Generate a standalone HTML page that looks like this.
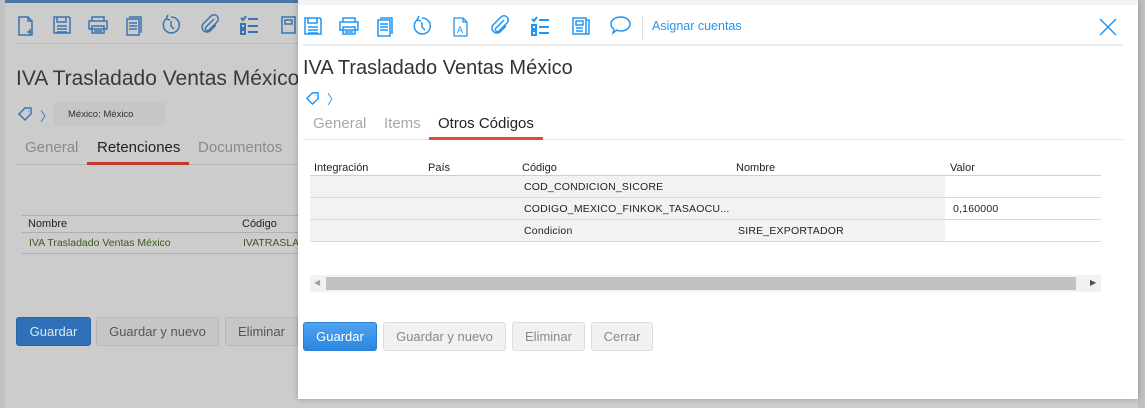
<!DOCTYPE html>
<html><head><meta charset="utf-8"><style>
*{margin:0;padding:0;box-sizing:border-box}
body{width:1145px;height:408px;overflow:hidden;background:#cccccc;font-family:"Liberation Sans",Arial,sans-serif;position:relative}
.a{position:absolute;white-space:nowrap}
svg.i{position:absolute;fill:none;stroke-width:1.5}
.bg svg.i{stroke:#3a74b0}
.md svg.i{stroke:#2196f3}
.btn{position:absolute;border-radius:3px;font-size:13px;text-align:center}
</style></head><body>
<div class="a" style="left:0;top:0;width:5px;height:408px;background:#c2c2c2"></div>
<div class="a" style="left:5px;top:0;width:293px;height:3px;background:#4a78a8"></div>
<div class="a" style="left:1138px;top:0;width:7px;height:3px;background:#4a78a8"></div>
<div class="a" style="left:1138px;top:0;width:7px;height:408px;background:#c0c0c0"></div>
<div class="bg">
<svg class="i" style="left:16px;top:15px" width="22" height="22" viewBox="0 0 22 22"><path d="M3 2h9l4 4v14H3z M12 2v4h4 M14 14v6 M11 17h6"/></svg>
<svg class="i" style="left:52px;top:15px" width="20" height="20" viewBox="0 0 20 20"><path d="M2 2h15l1 1v15H2z M5 2v5h9V2 M5 11h10 M5 14h10 M5 17h10"/></svg>
<svg class="i" style="left:87px;top:15px" width="22" height="20" viewBox="0 0 22 20"><path d="M5 6V2h12v4 M2 6h18v8H2z M5 11h12v7H5z M7 14h8 M7 16h8"/></svg>
<svg class="i" style="left:124px;top:15px" width="20" height="22" viewBox="0 0 20 22"><path d="M5 2h12v16 M3 4h12v16H3z M5 8h8 M5 11h8 M5 14h8"/></svg>
<svg class="i" style="left:160px;top:14px" width="22" height="22" viewBox="0 0 22 22"><path d="M6 5a8 8 0 1 0 5-2 M8 1l-2 4 4 1 M11 7v5l3 3"/></svg>
<svg class="i" style="left:199px;top:14px" width="22" height="22" viewBox="0 0 22 22"><path d="M15 5L7 13a2 2 0 0 0 3 3l8-8a4 4 0 0 0-6-6L4 10a5 5 0 0 0 7 7l6-6"/></svg>
<svg class="i" style="left:239px;top:15px" width="22" height="20" viewBox="0 0 22 20"><path d="M2 3l2 2 3-4 M2 9h4v4H2z M2 15h4v4H2z M9 4h10 M9 11h10 M9 17h10" stroke-width="2"/></svg>
<svg class="i" style="left:280px;top:15px" width="18" height="20" viewBox="0 0 18 20"><path d="M2 2h13v16H2z M5 5h7v4H5z"/></svg>
<div class="a" style="left:16px;top:43px;width:282px;height:1px;background:#bdbdbd"></div>
<div class="a" style="left:16px;top:67px;font-size:21px;color:#3a3a3a">IVA Trasladado Ventas México</div>
<svg class="i" style="left:17px;top:106px" width="16" height="16" viewBox="0 0 16 16"><path d="M2 8l6-6h6v6l-6 6z M11 5h.5"/></svg>
<div class="a" style="left:40px;top:106px;font-size:13px;color:#3a74b0">〉</div>
<div class="a" style="left:53px;top:102px;width:112px;height:24px;background:#c6c6c6;border-radius:3px;font-size:9.5px;color:#333;padding:7px 0 0 15px">México: México</div>
<div class="a" style="left:25px;top:139px;font-size:15px;color:#8a8a8a">General</div>
<div class="a" style="left:97px;top:139px;font-size:15px;color:#222">Retenciones</div>
<div class="a" style="left:198px;top:139px;font-size:15px;color:#8a8a8a">Documentos</div>
<div class="a" style="left:16px;top:164px;width:282px;height:1px;background:#b8b8b8"></div>
<div class="a" style="left:87px;top:162px;width:102px;height:3px;background:#c0392b"></div>
<div class="a" style="left:22px;top:215px;width:276px;height:1px;background:#b0b0b0"></div>
<div class="a" style="left:28px;top:218px;font-size:11px;color:#222">Nombre</div>
<div class="a" style="left:242px;top:218px;font-size:11px;color:#222">Código</div>
<div class="a" style="left:22px;top:232px;width:276px;height:1px;background:#b0b0b0"></div>
<div class="a" style="left:29px;top:237px;font-size:10.5px;color:#3d5a1a">IVA Trasladado Ventas México</div>
<div class="a" style="left:243px;top:237px;font-size:10.5px;color:#3d5a1a">IVATRASLA</div>
<div class="a" style="left:22px;top:253px;width:276px;height:1px;background:#b0b0b0"></div>
<div class="btn" style="left:16px;top:317px;width:75px;height:29px;background:#2f70b8;border:1px solid #2a64a5;color:#dde6f0;line-height:27px">Guardar</div>
<div class="btn" style="left:96px;top:317px;width:123px;height:29px;background:#c6c6c6;border:1px solid #b8b8b8;color:#555;line-height:27px">Guardar y nuevo</div>
<div class="btn" style="left:225px;top:317px;width:73px;height:29px;background:#c6c6c6;border:1px solid #b8b8b8;color:#555;line-height:27px">Eliminar</div>
</div>
<div class="md a" style="left:298px;top:0;width:840px;height:399px;background:#fff;box-shadow:0 0 6px rgba(0,0,0,.25)">
<div class="a" style="left:0;top:0;width:840px;height:5px;background:#f4f4f4"></div>
</div>
<div class="md">
<svg class="i" style="left:303px;top:16px" width="20" height="20" viewBox="0 0 20 20"><path d="M2 2h15l1 1v15H2z M5 2v5h9V2 M5 11h10 M5 14h10 M5 17h10"/></svg>
<svg class="i" style="left:338px;top:16px" width="22" height="20" viewBox="0 0 22 20"><path d="M5 6V2h12v4 M2 6h18v8H2z M5 11h12v7H5z M7 14h8 M7 16h8"/></svg>
<svg class="i" style="left:375px;top:16px" width="20" height="22" viewBox="0 0 20 22"><path d="M5 2h12v16 M3 4h12v16H3z M5 8h8 M5 11h8 M5 14h8"/></svg>
<svg class="i" style="left:411px;top:15px" width="22" height="22" viewBox="0 0 22 22"><path d="M6 5a8 8 0 1 0 5-2 M8 1l-2 4 4 1 M11 7v5l3 3"/></svg>
<svg class="i" style="left:452px;top:16px" width="18" height="22" viewBox="0 0 18 22"><path d="M2 2h9l4 4v14H2z M11 2v4h4" stroke-width="1.3"/><text x="5" y="17" font-size="9" fill="#2196f3" stroke="none" font-family="Liberation Sans">A</text></svg>
<svg class="i" style="left:489px;top:15px" width="22" height="22" viewBox="0 0 22 22"><path d="M15 5L7 13a2 2 0 0 0 3 3l8-8a4 4 0 0 0-6-6L4 10a5 5 0 0 0 7 7l6-6"/></svg>
<svg class="i" style="left:530px;top:16px" width="22" height="20" viewBox="0 0 22 20"><path d="M2 3l2 2 3-4 M2 9h4v4H2z M2 15h4v4H2z M9 4h10 M9 11h10 M9 17h10" stroke-width="2"/></svg>
<svg class="i" style="left:571px;top:16px" width="20" height="20" viewBox="0 0 20 20"><path d="M2 2h13v16H2z M5 5h7v4H5z M15 4h3v14H15"/><path d="M5 12h7 M5 15h7"/></svg>
<svg class="i" style="left:610px;top:15px" width="22" height="20" viewBox="0 0 22 20"><path d="M11 2c5 0 9 3 9 7s-4 7-9 7c-1 0-3 0-4-1l-4 3 1-4c-2-1-3-3-3-5 0-4 4-7 10-7z"/></svg>
<div class="a" style="left:642px;top:16px;width:1px;height:24px;background:#e0e0e0"></div>
<div class="a" style="left:652px;top:19px;font-size:12.5px;color:#2196f3">Asignar cuentas</div>
<svg class="i" style="left:1099px;top:18px" width="18" height="18" viewBox="0 0 18 18"><path d="M1 1l16 16M17 1L1 17"/></svg>
<div class="a" style="left:303px;top:44px;width:820px;height:2px;background:#ececec"></div>
<div class="a" style="left:303px;top:57px;font-size:20px;color:#333">IVA Trasladado Ventas México</div>
<svg class="i" style="left:305px;top:91px" width="15" height="15" viewBox="0 0 16 16"><path d="M2 8l6-6h6v6l-6 6z M11 5h.5"/></svg>
<div class="a" style="left:327px;top:89px;font-size:13px;color:#2196f3">〉</div>
<div class="a" style="left:313px;top:115px;font-size:15px;color:#a8a8a8">General</div>
<div class="a" style="left:384px;top:115px;font-size:15px;color:#a8a8a8">Items</div>
<div class="a" style="left:438px;top:115px;font-size:15px;color:#222">Otros Códigos</div>
<div class="a" style="left:303px;top:139px;width:820px;height:1px;background:#e3e3e3"></div>
<div class="a" style="left:429px;top:137px;width:114px;height:3px;background:#e04a3a"></div>
<div style="font-size:11px;color:#222">
<div class="a" style="left:314px;top:162px">Integración</div>
<div class="a" style="left:428px;top:162px">País</div>
<div class="a" style="left:522px;top:162px">Código</div>
<div class="a" style="left:736px;top:162px">Nombre</div>
<div class="a" style="left:950px;top:162px">Valor</div>
</div>
<div class="a" style="left:310px;top:175px;width:791px;height:1px;background:#d0d0d0"></div>
<div class="a" style="left:310px;top:176px;width:635px;height:66px;background:#f2f2f2"></div>
<div class="a" style="left:310px;top:197px;width:791px;height:1px;background:#d8d8d8"></div>
<div class="a" style="left:310px;top:219px;width:791px;height:1px;background:#d8d8d8"></div>
<div class="a" style="left:310px;top:241px;width:791px;height:1px;background:#d8d8d8"></div>
<div style="font-size:10.5px;color:#222;letter-spacing:0.2px">
<div class="a" style="left:524px;top:181px">COD_CONDICION_SICORE</div>
<div class="a" style="left:524px;top:203px">CODIGO_MEXICO_FINKOK_TASAOCU...</div>
<div class="a" style="left:953px;top:203px">0,160000</div>
<div class="a" style="left:524px;top:225px">Condicion</div>
<div class="a" style="left:738px;top:225px">SIRE_EXPORTADOR</div>
</div>
<div class="a" style="left:310px;top:275px;width:791px;height:17px;background:#f1f1f1"></div>
<div class="a" style="left:326px;top:277px;width:750px;height:13px;background:#c1c1c1"></div>
<div class="a" style="left:314px;top:278px;font-size:8px;color:#a0a0a0">◀</div>
<div class="a" style="left:1090px;top:278px;font-size:8px;color:#505050">▶</div>
<div class="btn" style="left:303px;top:322px;width:74px;height:29px;background:linear-gradient(#4ea3f2,#2b86e0);border:1px solid #2b7fd4;color:#fff;line-height:27px">Guardar</div>
<div class="btn" style="left:383px;top:322px;width:123px;height:29px;background:#f1f1f1;border:1px solid #ddd;color:#888;line-height:27px">Guardar y nuevo</div>
<div class="btn" style="left:512px;top:322px;width:73px;height:29px;background:#f1f1f1;border:1px solid #ddd;color:#888;line-height:27px">Eliminar</div>
<div class="btn" style="left:591px;top:322px;width:62px;height:29px;background:#f1f1f1;border:1px solid #ddd;color:#888;line-height:27px">Cerrar</div>
</div>
</body></html>
